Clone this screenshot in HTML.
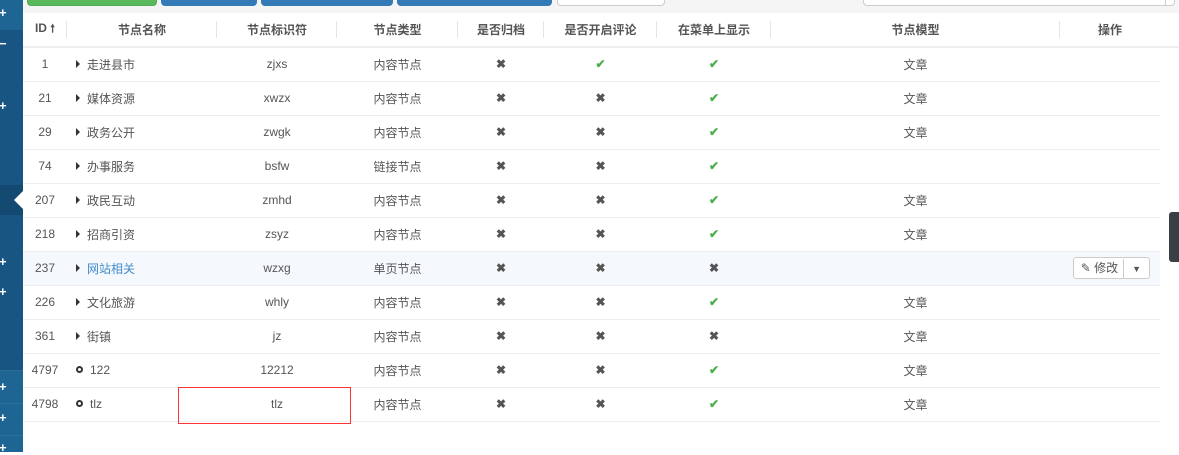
<!DOCTYPE html>
<html><head><meta charset="utf-8"><style>
*{margin:0;padding:0;box-sizing:border-box}
body{width:1179px;height:452px;overflow:hidden;background:#fff;font-family:"Liberation Sans","Noto Sans CJK SC",sans-serif;font-size:12px;color:#555;position:relative}
.sb{position:absolute;left:0;top:0;width:23px;height:452px;background:#195582}
.sb div{position:absolute;left:0;width:23px}
.pl{position:absolute;left:-1px;color:#fff;font-size:13px;font-weight:bold;line-height:14px}
.top{position:absolute;left:23px;top:0;width:1156px;height:13px;background:#f5f5f5}
.btn{position:absolute;top:-4px;height:10px;border-radius:0 0 4px 4px}
table{position:absolute;left:23px;top:13px;border-collapse:collapse;table-layout:fixed}
td,th{height:34px;text-align:center;border-bottom:1px solid #eee;white-space:nowrap;padding:0}
th{font-weight:bold;color:#555;height:34px;border-bottom:2px solid #eee;position:relative}
th.s::after{content:"";position:absolute;right:0;top:8px;height:17px;border-right:1px solid #e5e5e5}
td.n{text-align:left;padding-left:9px}
.tri{display:inline-block;width:0;height:0;border-left:4px solid #333;border-top:4px solid transparent;border-bottom:4px solid transparent;margin-right:7px;vertical-align:1px}
.ci{display:inline-block;width:7px;height:7px;border:2px solid #333;border-radius:50%;margin-right:7px;vertical-align:1px}
.x{color:#555;font-size:12px;font-weight:bold}
.ok{color:#4cae4c;font-size:12px;font-weight:bold}
tr.hl td{background:#f5f9fd}
</style></head><body>
<div class="sb">
<div style="top:0;height:30px;background:#1f6593"></div>
<div style="top:185px;height:30px;background:#144a72"></div>
<div style="top:370px;height:82px;background:#1f6593;border-top:1px solid #2a6c98"></div>
<div style="top:403px;height:1px;background:#2b6f9b"></div>
<div style="top:435px;height:1px;background:#2b6f9b"></div>
<span class="pl" style="top:6px">+</span>
<span class="pl" style="top:37px">−</span>
<span class="pl" style="top:99px">+</span>
<span class="pl" style="top:255px">+</span>
<span class="pl" style="top:285px">+</span>
<span class="pl" style="top:380px">+</span>
<span class="pl" style="top:411px">+</span>
<span class="pl" style="top:441px">+</span>
<span style="position:absolute;left:14px;top:191px;width:0;height:0;border-right:9px solid #fff;border-top:9px solid transparent;border-bottom:9px solid transparent"></span>
</div>
<div class="top">
<div class="btn" style="left:4px;width:130px;background:#5cb85c;border:1px solid #4cae4c"></div>
<div class="btn" style="left:138px;width:96px;background:#337ab7"></div>
<div class="btn" style="left:238px;width:132px;background:#337ab7"></div>
<div class="btn" style="left:374px;width:155px;background:#337ab7"></div>
<div class="btn" style="left:534px;width:108px;background:#fff;border:1px solid #ccc"></div>
<div class="btn" style="left:840px;width:312px;background:#fff;border:1px solid #ccc"></div>
<div style="position:absolute;left:1142px;top:0;height:5px;border-left:1px solid #ccc"></div>
</div>
<table>
<colgroup><col style="width:44px"><col style="width:150px"><col style="width:120px"><col style="width:121px"><col style="width:86px"><col style="width:113px"><col style="width:114px"><col style="width:289px"><col style="width:100px"></colgroup>
<tr><th class="s">ID <span style="font-size:11px">🠕</span></th><th class="s">节点名称</th><th class="s">节点标识符</th><th class="s">节点类型</th><th class="s">是否归档</th><th class="s">是否开启评论</th><th class="s">在菜单上显示</th><th class="s">节点模型</th><th>操作</th></tr>
<tr><td>1</td><td class="n"><span class="tri"></span>走进县市</td><td>zjxs</td><td>内容节点</td><td class="x">✖</td><td class="ok">✔</td><td class="ok">✔</td><td>文章</td><td></td></tr>
<tr><td>21</td><td class="n"><span class="tri"></span>媒体资源</td><td>xwzx</td><td>内容节点</td><td class="x">✖</td><td class="x">✖</td><td class="ok">✔</td><td>文章</td><td></td></tr>
<tr><td>29</td><td class="n"><span class="tri"></span>政务公开</td><td>zwgk</td><td>内容节点</td><td class="x">✖</td><td class="x">✖</td><td class="ok">✔</td><td>文章</td><td></td></tr>
<tr><td>74</td><td class="n"><span class="tri"></span>办事服务</td><td>bsfw</td><td>链接节点</td><td class="x">✖</td><td class="x">✖</td><td class="ok">✔</td><td></td><td></td></tr>
<tr><td>207</td><td class="n"><span class="tri"></span>政民互动</td><td>zmhd</td><td>内容节点</td><td class="x">✖</td><td class="x">✖</td><td class="ok">✔</td><td>文章</td><td></td></tr>
<tr><td>218</td><td class="n"><span class="tri"></span>招商引资</td><td>zsyz</td><td>内容节点</td><td class="x">✖</td><td class="x">✖</td><td class="ok">✔</td><td>文章</td><td></td></tr>
<tr class="hl"><td>237</td><td class="n" style="color:#428bca"><span class="tri"></span>网站相关</td><td>wzxg</td><td>单页节点</td><td class="x">✖</td><td class="x">✖</td><td class="x">✖</td><td></td><td style="text-align:right;padding-right:10px"><span style="display:inline-block;height:22px;border:1px solid #ccc;border-radius:3px;background:#fff;line-height:20px;font-size:12px;color:#555"><span style="padding:0 5px 0 7px">✎ 修改</span><span style="display:inline-block;border-left:1px solid #ccc;padding:0 8px;font-size:9px">▼</span></span></td></tr>
<tr><td>226</td><td class="n"><span class="tri"></span>文化旅游</td><td>whly</td><td>内容节点</td><td class="x">✖</td><td class="x">✖</td><td class="ok">✔</td><td>文章</td><td></td></tr>
<tr><td>361</td><td class="n"><span class="tri"></span>街镇</td><td>jz</td><td>内容节点</td><td class="x">✖</td><td class="x">✖</td><td class="x">✖</td><td>文章</td><td></td></tr>
<tr><td>4797</td><td class="n"><span class="ci"></span>122</td><td>12212</td><td>内容节点</td><td class="x">✖</td><td class="x">✖</td><td class="ok">✔</td><td>文章</td><td></td></tr>
<tr><td>4798</td><td class="n"><span class="ci"></span>tlz</td><td>tlz</td><td>内容节点</td><td class="x">✖</td><td class="x">✖</td><td class="ok">✔</td><td>文章</td><td></td></tr>
</table>
<div style="position:absolute;left:1160px;top:46px;width:19px;height:2px;background:#eee"></div>
<div style="position:absolute;left:1160px;top:48px;width:19px;height:404px;background:#fff"></div>
<div style="position:absolute;left:178px;top:387px;width:173px;height:37px;border:1px solid #f33"></div>
<div style="position:absolute;left:1169px;top:212px;width:10px;height:50px;background:#3a3f45;border-radius:3px 0 0 3px"></div>
</body></html>
